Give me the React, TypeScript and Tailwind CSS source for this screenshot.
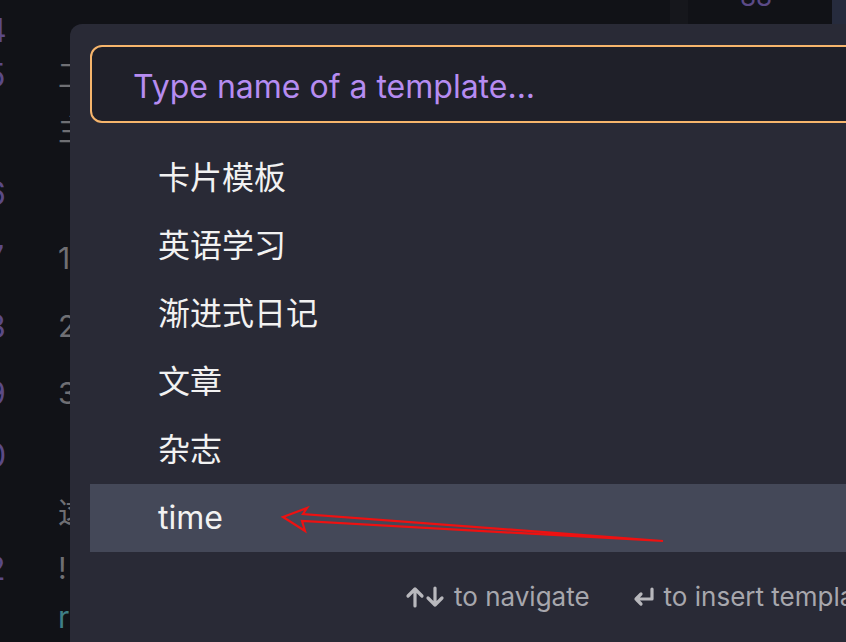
import React from 'react'

const templates = ['卡片模板', '英语学习', '渐进式日记', '文章', '杂志', 'time']

// background editor lines: [line number, text, height]
const lines: { n: string; t: string; h: number; tc?: string }[] = [
  { n: '4', t: '', h: 55 },
  { n: '5', t: '工', h: 35 },
  { n: '', t: '主', h: 72 },
  { n: '6', t: '', h: 58 },
  { n: '7', t: '1', h: 70 },
  { n: '8', t: '2', h: 67 },
  { n: '9', t: '3', h: 67 },
  { n: '0', t: '', h: 58 },
  { n: '1', t: '这', h: 55 },
  { n: '2', t: '!', h: 57 },
  { n: '', t: 'r', h: 40, tc: 'text-[#3f7f86]' },
]

export default function App() {
  const font = { fontFamily: 'Inter, "Noto Sans CJK SC", sans-serif' }

  return (
    <div className="relative h-[642px] w-[846px] overflow-hidden bg-[#111217]" style={font}>
      {/* editor behind the modal */}
      <div className="flex h-full">
        <div className="w-[670px] pt-[3px]">
          {lines.map((l, i) => (
            <div key={i} className="flex items-center" style={{ height: l.h }}>
              <span className="-ml-[14px] w-[50px] text-[32px] text-[#5b4a86]">
                {l.n}
              </span>
              <span className={`ml-[22px] text-[30px] ${l.tc ?? 'text-[#6f6f73]'}`}>{l.t}</span>
            </div>
          ))}
        </div>
        <div className="w-[18px] bg-[#16171c]" />
        <div className="-mt-[16px] w-[138px] pl-[52px] text-[26px] leading-none text-[#5b4a86]">88</div>
        <div className="w-[6px] bg-[#111217]" />
        <div className="flex-1 bg-[#262b3d]" />
      </div>

      {/* template picker modal */}
      <div className="absolute left-[70px] top-[24px] h-[700px] w-[900px] rounded-[12px] bg-[#292a36] px-[20px] pt-[21px]">
        <div className="flex h-[78px] items-center rounded-[12px] border-2 border-[#f6b56c] bg-[#1f2029] pl-[41px] pt-[5px]">
          <span className="text-[32px] text-[#b68cf1]">Type name of a template...</span>
        </div>
        <div className="mt-[21px]">
          {templates.map((t) => (
            <div
              key={t}
              className={`flex h-[68px] items-center pl-[68px] text-[32px] text-[#f2f2f2] ${t === 'time' ? 'bg-[#444858]' : ''}`}
            >
              {t}
            </div>
          ))}
        </div>
        <div className="mt-[25px] flex items-center gap-[43px] pl-[315px] text-[26px] text-[#a7a7ad]">
          <span className="flex items-center gap-[9px]">
            <span className="flex items-center">
              <svg width="20" height="22" viewBox="0 0 20 22" fill="none" stroke="#b8b8bd" strokeWidth="3.2" strokeLinecap="round" strokeLinejoin="round">
                <path d="M10 20V3M3 10l7-7 7 7" />
              </svg>
              <svg width="20" height="22" viewBox="0 0 20 22" fill="none" stroke="#b8b8bd" strokeWidth="3.2" strokeLinecap="round" strokeLinejoin="round">
                <path d="M10 2v17M3 12l7 7 7-7" />
              </svg>
            </span>
            to navigate
          </span>
          <span className="flex items-center gap-[9px] whitespace-nowrap">
            <svg width="22" height="20" viewBox="0 0 22 20" fill="none" stroke="#b8b8bd" strokeWidth="3.2" strokeLinecap="round" strokeLinejoin="round">
              <path d="M19 2v10H3M8 7l-5 5 5 5" />
            </svg>
            to insert template
          </span>
        </div>
      </div>

      {/* red annotation arrow */}
      <svg className="pointer-events-none absolute left-0 top-0" width="846" height="642">
        <polygon
          points="283,517 307,508 303,514 663,541 302,521 305,531"
          fill="none"
          stroke="#ee1111"
          strokeWidth="2.2"
          strokeLinejoin="miter"
        />
      </svg>
    </div>
  )
}
